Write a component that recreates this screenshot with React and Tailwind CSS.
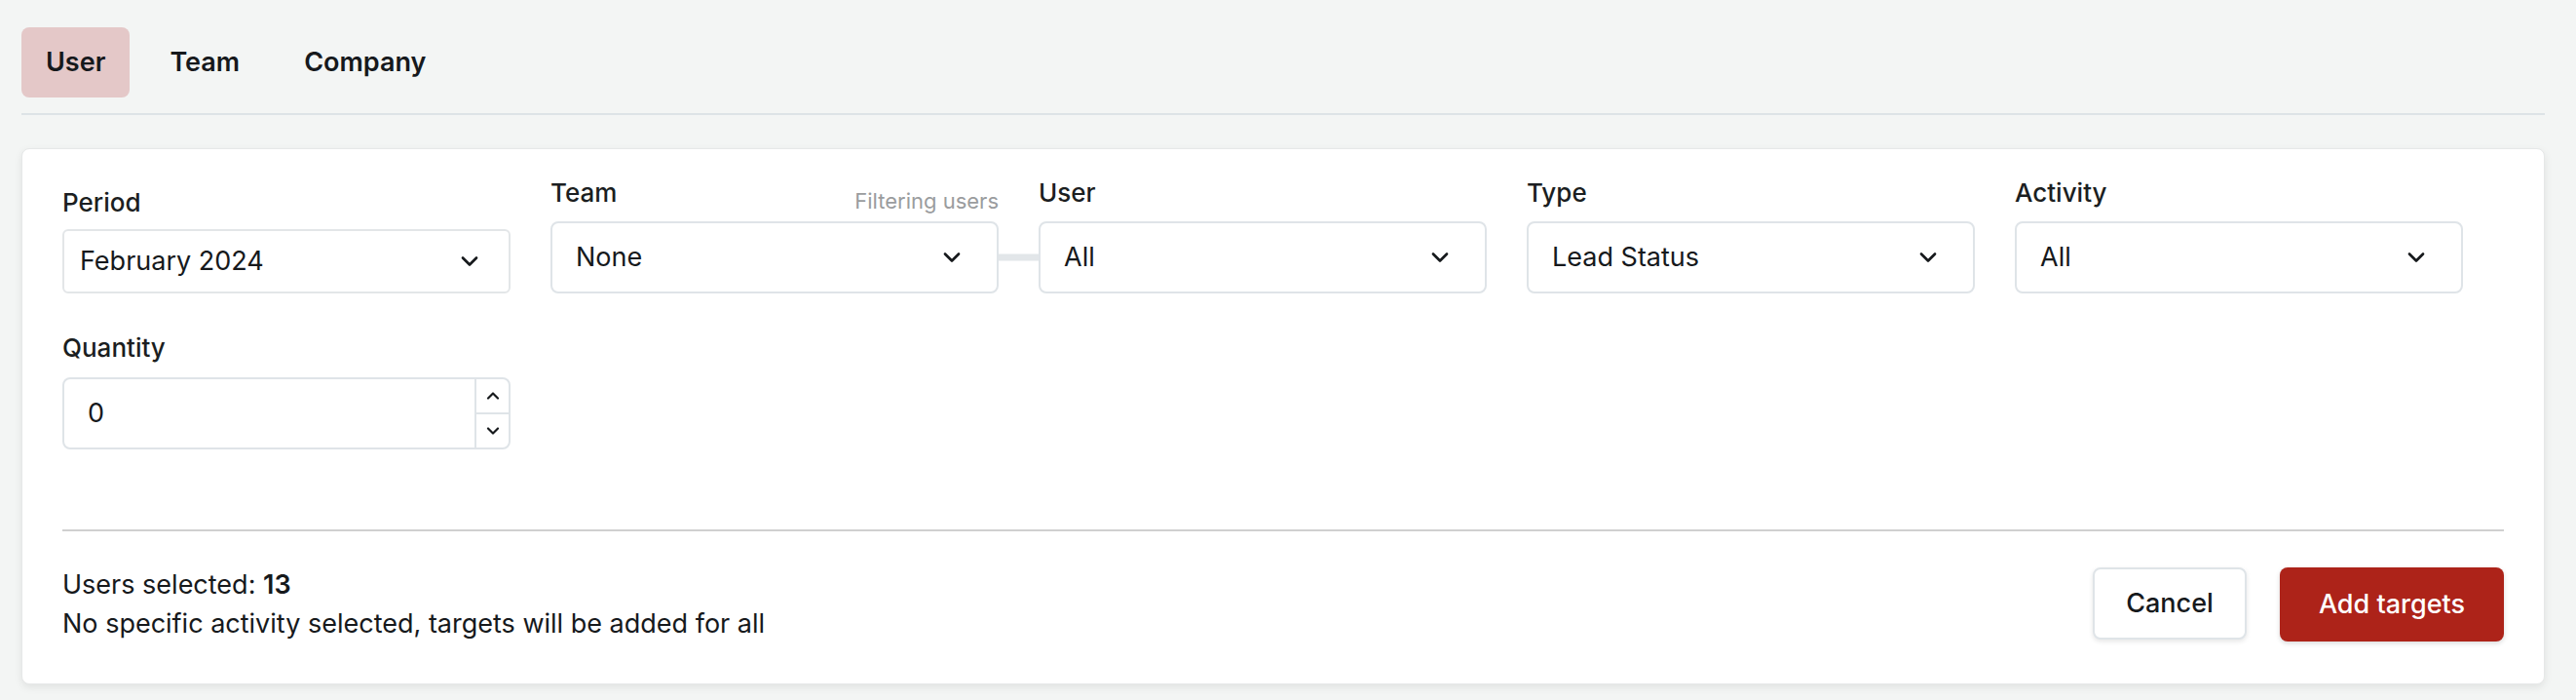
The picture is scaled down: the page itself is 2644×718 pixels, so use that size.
import { ChevronDown, ChevronUp } from "lucide-react";

const fields = [
  { label: "Team", value: "None", hint: "Filtering users", link: true },
  { label: "User", value: "All" },
  { label: "Type", value: "Lead Status" },
  { label: "Activity", value: "All" },
];

function Select({ label, value, hint, link }) {
  return (
    <div className="flex w-[460px] flex-col">
      <div className="mb-[10px] flex items-end justify-between">
        <span className="text-[26px] leading-[39px] font-medium text-[#1b1e21]">{label}</span>
        {hint && <span className="text-[22px] leading-none text-[#9a9c9e]">{hint}</span>}
      </div>
      <div className="relative flex h-[74px] items-center justify-between rounded-[8px] border-2 border-[#dfe4e8] bg-white pl-[24px] pr-[32px]">
        <span className="text-[27px] text-[#16191c]">{value}</span>
        <ChevronDown size={28} strokeWidth={2.3} className="text-[#16191c]" />
        {/* barra que une Team con User */}
        {link && <div className="absolute top-1/2 right-[-43px] h-[7px] w-[41px] -translate-y-1/2 bg-[#e2e6e9]" />}
      </div>
    </div>
  );
}

export default function App() {
  return (
    <div className="min-h-screen bg-[#f3f5f4] pl-[22px] pr-[32px] pt-[28px] font-['Inter',sans-serif] text-[#16191c]">
      {/* Tabs */}
      <div className="flex gap-[16px]">
        <button className="h-[72px] rounded-[8px] bg-[#e4c8c8] px-[25px] text-[27px] font-semibold">User</button>
        <button className="h-[72px] rounded-[8px] px-[25px] text-[27px] font-semibold">Team</button>
        <button className="h-[72px] rounded-[8px] px-[25px] text-[27px] font-semibold">Company</button>
      </div>
      <div className="mt-[16px] h-[2px] bg-[#dde3e6]" />

      {/* Card */}
      <div className="mt-[34px] rounded-[8px] border border-[#e6e8e8] bg-white px-[41px] pt-[25px] pb-[41px] shadow-[0_3px_8px_rgba(0,0,0,0.08)]">
        <div className="flex flex-wrap items-end gap-x-[41px] gap-y-[36px]">
          {/* Period */}
          <div className="flex w-[460px] flex-col">
            <span className="mb-[8px] text-[26px] leading-[39px] font-medium text-[#1b1e21]">Period</span>
            <div className="flex h-[66px] items-center justify-between rounded-[6px] border-2 border-[#e3e6e8] bg-white pl-[16px] pr-[26px]">
              <span className="text-[27px]">February 2024</span>
              <ChevronDown size={28} strokeWidth={2.3} />
            </div>
          </div>

          {fields.map((f) => (
            <Select key={f.label} {...f} />
          ))}

          {/* Quantity */}
          <div className="flex w-[460px] flex-col">
            <span className="mb-[11px] text-[26px] leading-[39px] font-medium text-[#1b1e21]">Quantity</span>
            <div className="flex h-[74px] overflow-hidden rounded-[8px] border-2 border-[#dfe4e8] bg-white">
              <div className="flex flex-1 items-center pl-[24px] text-[27px]">0</div>
              <div className="flex w-[35px] flex-col border-l-2 border-[#dfe4e8]">
                <div className="flex flex-1 items-center justify-center border-b-2 border-[#dfe4e8]">
                  <ChevronUp size={20} strokeWidth={2.6} />
                </div>
                <div className="flex flex-1 items-center justify-center">
                  <ChevronDown size={20} strokeWidth={2.6} />
                </div>
              </div>
            </div>
          </div>
        </div>

        <div className="mt-[82px] h-[2px] bg-[#d0d0d0]" />

        {/* Footer */}
        <div className="flex items-center justify-between pt-[35px]">
          <div className="text-[27px] leading-[40px] text-[#16191c]">
            <p>
              Users selected: <span className="font-semibold">13</span>
            </p>
            <p>No specific activity selected, targets will be added for all</p>
          </div>
          <div className="flex gap-[34px]">
            <button className="h-[74px] w-[158px] rounded-[8px] border-2 border-[#dfe4e8] bg-white text-[27px] font-medium shadow-[0_2px_5px_rgba(0,0,0,0.1)]">
              Cancel
            </button>
            <button className="h-[76px] w-[230px] rounded-[8px] bg-[#ad2319] text-[27px] font-medium text-white shadow-[0_2px_5px_rgba(0,0,0,0.15)]">
              Add targets
            </button>
          </div>
        </div>
      </div>
    </div>
  );
}
